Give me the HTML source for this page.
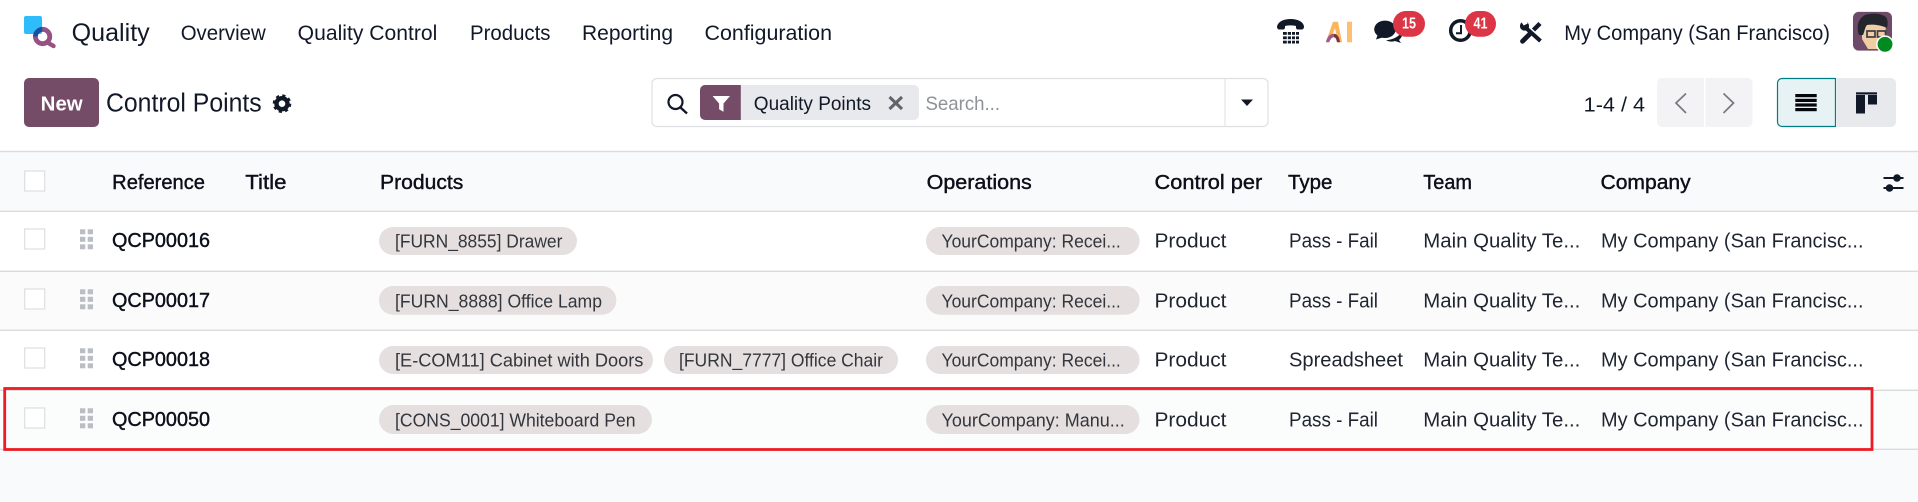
<!DOCTYPE html>
<html lang="en">
<head>
<meta charset="utf-8">
<title>Quality - Control Points</title>
<style>
html,body{margin:0;padding:0;background:#fff;width:1918px;height:502px;overflow:hidden}
svg{display:block}
text{font-family:"Liberation Sans",sans-serif;fill:#111827;white-space:pre}
.nav{font-size:21px}
.h{font-size:20px;fill:#0b0f1a;stroke:#0b0f1a;stroke-width:.4}
.r{font-size:20px;fill:#1f2530}
.b{font-size:20px;fill:#0b0f1a;stroke:#0b0f1a;stroke-width:.4}
.p{font-size:18.5px;fill:#33363c}
.pill{fill:#e6dfdf}
.cb{fill:#fff;stroke:#dcdee1;stroke-width:1.2}
.ln{fill:#d9dbde}
.d{fill:#b9bec4}
</style>
</head>
<body>
<svg xmlns="http://www.w3.org/2000/svg" width="1918" height="502" viewBox="0 0 1918 502">
<defs>
<g id="grip"><rect class="d" x="80" y="0" width="5.300" height="5"/><rect class="d" x="87.700" y="0" width="5.300" height="5"/><rect class="d" x="80" y="7.500" width="5.300" height="5"/><rect class="d" x="87.700" y="7.500" width="5.300" height="5"/><rect class="d" x="80" y="15" width="5.300" height="5"/><rect class="d" x="87.700" y="15" width="5.300" height="5"/></g>
</defs>
<rect width="1918" height="502" fill="#fff"/>

<!-- top nav -->
<rect x="24" y="16" width="18" height="18" rx="2" fill="#2ebcfa"/>
<path d="M35.400 36.500a7.200 7.200 0 0 1 7.200-7.200" fill="none" stroke="#1a4fa0" stroke-width="4.800"/>
<path d="M42.600 29.300a7.200 7.200 0 0 1 0 14.400 7.200 7.200 0 0 1-7.200-7.200" fill="none" stroke="#985184" stroke-width="4.800"/>
<path d="M47.500 42.500l6 3.500" fill="none" stroke="#985184" stroke-width="4.400" stroke-linecap="round"/>
<text x="71.700" y="41" font-size="25" textLength="78" lengthAdjust="spacingAndGlyphs">Quality</text>
<text class="nav" x="180.700" y="40" textLength="85" lengthAdjust="spacingAndGlyphs">Overview</text>
<text class="nav" x="297.700" y="40" textLength="139.600" lengthAdjust="spacingAndGlyphs">Quality Control</text>
<text class="nav" x="470" y="40" textLength="80.500" lengthAdjust="spacingAndGlyphs">Products</text>
<text class="nav" x="582" y="40" textLength="91" lengthAdjust="spacingAndGlyphs">Reporting</text>
<text class="nav" x="704.500" y="40" textLength="127.500" lengthAdjust="spacingAndGlyphs">Configuration</text>

<!-- phone -->
<path d="M1277 26.500c1-5 7-7.500 13.500-7.500s13 2.500 13.500 7.500c0 2-1 3-2.500 3h-3.500c-1.500 0-2-1-2-2.500v-1c-3.500-.8-7.500-.8-11 0v1c0 1.500-.5 2.500-2 2.500H1279.500c-1.500 0-2.500-1-2.500-3z" fill="#111827"/>
<g fill="#111827"><rect x="1283" y="32" width="16" height="2.800"/><rect x="1283" y="36.400" width="16" height="2.800"/><rect x="1283" y="40.700" width="16" height="2.800"/></g>
<g fill="#fff"><rect x="1286.800" y="31" width="1" height="13"/><rect x="1291" y="31" width="1" height="13"/><rect x="1295" y="31" width="1" height="13"/></g>
<!-- AI -->
<path d="M1333 21.700h5l4 20.600h-4l-3-14-3.500 9h-4z" fill="#f9b65f"/>
<path d="M1326 42.300c.8-5.500 4.200-8.500 7.700-8.500v3.500c-1.800 0-3.500 2.300-4.500 5z" fill="#9c5a8e"/>
<path d="M1333.700 33.800c3.300 0 5.800 3 6.300 8.500h-3c-.5-3-1.500-5-3.300-5z" fill="#7c3434"/>
<rect x="1347" y="21.700" width="5" height="20.600" fill="#fcbf73"/>
<!-- chat -->
<path d="M1386 40c6 0 12-3 15-7l1 3c-1 2-2 3-3 4l2 3-6-2c-3 1-6 1-9-1z" fill="#111827"/>
<ellipse cx="1385" cy="29.300" rx="10.800" ry="8.700" fill="#111827"/>
<path d="M1378 34l-2 5.500 8-2.500z" fill="#111827"/>
<rect x="1393" y="11" width="32" height="25.700" rx="12.800" fill="#dc3545"/>
<text x="1402" y="28.500" font-size="15.500" font-weight="700" style="fill:#fff" textLength="14" lengthAdjust="spacingAndGlyphs">15</text>
<!-- clock -->
<circle cx="1460.500" cy="30.500" r="9.800" fill="none" stroke="#111827" stroke-width="3.500"/>
<path d="M1461 25v8.300h-5" fill="none" stroke="#111827" stroke-width="2"/>
<rect x="1465" y="11" width="31" height="25.700" rx="12.800" fill="#dc3545"/>
<text x="1473.500" y="28.500" font-size="15.500" font-weight="700" style="fill:#fff" textLength="14" lengthAdjust="spacingAndGlyphs">41</text>
<!-- tools -->
<path d="M1526 28l14.500 13" fill="none" stroke="#111827" stroke-width="4"/>
<circle cx="1524.500" cy="26" r="4.600" fill="#111827"/>
<path d="M1520 20l3.700 5.500 4-2-2.700-5z" fill="#fff"/>
<path d="M1522.500 41.300l7-7" fill="none" stroke="#111827" stroke-width="4.800" stroke-linecap="round"/>
<path d="M1533.500 30l6.500-6.500" fill="none" stroke="#111827" stroke-width="4.400"/>

<text class="nav" x="1564.300" y="40" textLength="265.700" lengthAdjust="spacingAndGlyphs">My Company (San Francisco)</text>

<!-- avatar -->
<clipPath id="av"><rect x="1853" y="11.700" width="39" height="39" rx="6"/></clipPath>
<g clip-path="url(#av)">
<rect x="1853" y="11.700" width="39" height="39" fill="#6d4b68"/>
<path d="M1862 24c8-4 18-3 24 1l-1 13-6 11h-11l-6-10z" fill="#f1cda3"/>
<path d="M1859 35c-3-9-1-16 6-20 7-2 15-2 21 2 2 3 2 7 1 11-6-3-14-4-20-3-2 2-2 5-4 10z" fill="#23262d"/>
<g fill="none" stroke="#3a3e44" stroke-width="1.700"><rect x="1867" y="31" width="8" height="6"/><rect x="1877.500" y="31" width="8" height="6"/></g>
</g>
<circle cx="1885" cy="44.300" r="8.200" fill="#008a1f" stroke="#fff" stroke-width="1.500"/>

<!-- control panel -->
<rect x="24" y="78" width="75" height="49" rx="5" fill="#744c68"/>
<text x="40.700" y="110.700" font-size="20" font-weight="700" style="fill:#fff" textLength="42" lengthAdjust="spacingAndGlyphs">New</text>
<text x="106" y="111.500" font-size="25.500" textLength="155.700" lengthAdjust="spacingAndGlyphs">Control Points</text>
<circle cx="282" cy="103.700" r="5.500" fill="none" stroke="#111827" stroke-width="4.400"/>
<circle cx="282" cy="103.700" r="8.200" fill="none" stroke="#111827" stroke-width="2.200" stroke-dasharray="3.200 3.240"/>

<!-- search -->
<rect x="652" y="78.500" width="616" height="48" rx="5" fill="#fff" stroke="#dee0e3" stroke-width="1.200"/>
<rect x="1224.500" y="79" width="1" height="47" fill="#dee0e3"/>
<circle cx="675.500" cy="102" r="7" fill="none" stroke="#111827" stroke-width="2.200"/>
<path d="M680.500 107.500l6.500 6" stroke="#111827" stroke-width="2.400" fill="none"/>
<rect x="700" y="85" width="219" height="35" rx="5" fill="#e7e9ed"/>
<path d="M705 85h35.800v35H705a5 5 0 0 1-5-5V90a5 5 0 0 1 5-5z" fill="#744c68"/>
<path d="M712.600 96h17.400l-6.500 7.500v8.200l-4.400-2.500v-5.700z" fill="#fff"/>
<text x="753.800" y="110" font-size="19" textLength="117.200" lengthAdjust="spacingAndGlyphs">Quality Points</text>
<path d="M889.500 97l12.500 12M902 97l-12.500 12" stroke="#5f636a" stroke-width="3" fill="none"/>
<text x="925.500" y="110" font-size="19.500" style="fill:#8f9296" textLength="74.500" lengthAdjust="spacingAndGlyphs">Search...</text>
<path d="M1241 99.500h12l-6 6.500z" fill="#111827"/>

<!-- pager -->
<text x="1583.700" y="111.500" font-size="20" textLength="61.300" lengthAdjust="spacingAndGlyphs">1-4 / 4</text>
<path d="M1662 78h42v49h-42a5 5 0 0 1-5-5V83a5 5 0 0 1 5-5z" fill="#f3f3f5"/>
<path d="M1705.500 78h42a5 5 0 0 1 5 5v39a5 5 0 0 1-5 5h-42z" fill="#f3f3f5"/>
<path d="M1686 93.500l-10 9.500 10 10" fill="none" stroke="#77797f" stroke-width="1.700"/>
<path d="M1723.500 93.500l10 9.500-10 10" fill="none" stroke="#77797f" stroke-width="1.700"/>

<!-- view switcher -->
<path d="M1782 78.500h53.500v48H1782a4.500 4.500 0 0 1-4.500-4.500V83a4.500 4.500 0 0 1 4.500-4.500z" fill="#e6f2f3" stroke="#017e84" stroke-width="1.200"/>
<path d="M1837 78h54a5 5 0 0 1 5 5v39a5 5 0 0 1-5 5h-54z" fill="#e7e9ed"/>
<g fill="#05070d"><rect x="1795.300" y="94" width="21.400" height="3.200"/><rect x="1795.300" y="98.800" width="21.400" height="3.200"/><rect x="1795.300" y="103.400" width="21.400" height="3.200"/><rect x="1795.300" y="108" width="21.400" height="3.200"/></g>
<g fill="#111827"><rect x="1856" y="92.300" width="21" height="2.200"/><rect x="1856" y="95" width="9" height="18.500"/><rect x="1868" y="95" width="9" height="9.500"/></g>

<!-- table -->
<rect x="0" y="151" width="1918" height="351" fill="#f9fafb"/>
<rect x="0" y="212" width="1918" height="59" fill="#fff"/>
<rect x="0" y="272" width="1918" height="58" fill="#fbfbfc"/>
<rect x="0" y="331" width="1918" height="59" fill="#fff"/>
<rect x="0" y="391" width="1918" height="58" fill="#fbfcfc"/>
<rect class="ln" x="0" y="150.800" width="1918" height="1.400"/>
<rect class="ln" x="0" y="210.600" width="1918" height="1.400"/>
<rect class="ln" x="0" y="270.600" width="1918" height="1.400"/>
<rect class="ln" x="0" y="329.600" width="1918" height="1.400"/>
<rect class="ln" x="0" y="389.600" width="1918" height="1.400"/>
<rect class="ln" x="0" y="448.600" width="1918" height="1.400"/>

<rect class="cb" x="24.700" y="171" width="20" height="20"/>
<text class="h" x="112.200" y="189" textLength="92.800" lengthAdjust="spacingAndGlyphs">Reference</text>
<text class="h" x="245.300" y="189" textLength="41.200" lengthAdjust="spacingAndGlyphs">Title</text>
<text class="h" x="380" y="189" textLength="83.300" lengthAdjust="spacingAndGlyphs">Products</text>
<text class="h" x="926.600" y="189" textLength="105.200" lengthAdjust="spacingAndGlyphs">Operations</text>
<text class="h" x="1154.500" y="189" textLength="107.800" lengthAdjust="spacingAndGlyphs">Control per</text>
<text class="h" x="1288" y="189" textLength="44.400" lengthAdjust="spacingAndGlyphs">Type</text>
<text class="h" x="1423.300" y="189" textLength="48.700" lengthAdjust="spacingAndGlyphs">Team</text>
<text class="h" x="1600.500" y="189" textLength="90.200" lengthAdjust="spacingAndGlyphs">Company</text>
<g fill="#111827" stroke="#111827"><path d="M1883.500 178h20M1883.500 188h20" stroke-width="2" fill="none"/><circle cx="1897" cy="178" r="3.800" stroke="none"/><circle cx="1889.500" cy="188" r="3.800" stroke="none"/></g>

<!-- row 1 -->
<rect class="cb" x="24.700" y="229" width="20" height="20"/>
<use href="#grip" y="229.300"/>
<text class="b" x="112" y="247" textLength="98" lengthAdjust="spacingAndGlyphs">QCP00016</text>
<rect class="pill" x="379" y="227" width="198" height="28" rx="14"/>
<text class="p" x="395" y="247.500" textLength="167.400" lengthAdjust="spacingAndGlyphs">[FURN_8855] Drawer</text>
<rect class="pill" x="926" y="227" width="213.600" height="28" rx="14"/>
<text class="p" x="941.500" y="247.500" textLength="179.300" lengthAdjust="spacingAndGlyphs">YourCompany: Recei...</text>
<text class="r" x="1154.500" y="247.500" textLength="72" lengthAdjust="spacingAndGlyphs">Product</text>
<text class="r" x="1289" y="247.500" textLength="89" lengthAdjust="spacingAndGlyphs">Pass - Fail</text>
<text class="r" x="1423.300" y="247.500" textLength="157" lengthAdjust="spacingAndGlyphs">Main Quality Te...</text>
<text class="r" x="1601" y="247.500" textLength="262.500" lengthAdjust="spacingAndGlyphs">My Company (San Francisc...</text>

<!-- row 2 -->
<rect class="cb" x="24.700" y="289" width="20" height="20"/>
<use href="#grip" y="289.300"/>
<text class="b" x="112" y="307" textLength="98" lengthAdjust="spacingAndGlyphs">QCP00017</text>
<rect class="pill" x="379" y="286" width="237.300" height="28.700" rx="14"/>
<text class="p" x="395" y="307.500" textLength="207" lengthAdjust="spacingAndGlyphs">[FURN_8888] Office Lamp</text>
<rect class="pill" x="926" y="286" width="213.600" height="28.700" rx="14"/>
<text class="p" x="941.500" y="307.500" textLength="179.300" lengthAdjust="spacingAndGlyphs">YourCompany: Recei...</text>
<text class="r" x="1154.500" y="307.500" textLength="72" lengthAdjust="spacingAndGlyphs">Product</text>
<text class="r" x="1289" y="307.500" textLength="89" lengthAdjust="spacingAndGlyphs">Pass - Fail</text>
<text class="r" x="1423.300" y="307.500" textLength="157" lengthAdjust="spacingAndGlyphs">Main Quality Te...</text>
<text class="r" x="1601" y="307.500" textLength="262.500" lengthAdjust="spacingAndGlyphs">My Company (San Francisc...</text>

<!-- row 3 -->
<rect class="cb" x="24.700" y="348" width="20" height="20"/>
<use href="#grip" y="348.300"/>
<text class="b" x="112" y="366" textLength="98" lengthAdjust="spacingAndGlyphs">QCP00018</text>
<rect class="pill" x="379" y="346" width="274" height="28" rx="14"/>
<text class="p" x="395" y="366.500" textLength="248.400" lengthAdjust="spacingAndGlyphs">[E-COM11] Cabinet with Doors</text>
<rect class="pill" x="664" y="346" width="234" height="28" rx="14"/>
<text class="p" x="679" y="366.500" textLength="204" lengthAdjust="spacingAndGlyphs">[FURN_7777] Office Chair</text>
<rect class="pill" x="926" y="346" width="213.600" height="28" rx="14"/>
<text class="p" x="941.500" y="366.500" textLength="179.300" lengthAdjust="spacingAndGlyphs">YourCompany: Recei...</text>
<text class="r" x="1154.500" y="366.500" textLength="72" lengthAdjust="spacingAndGlyphs">Product</text>
<text class="r" x="1289" y="366.500" textLength="114" lengthAdjust="spacingAndGlyphs">Spreadsheet</text>
<text class="r" x="1423.300" y="366.500" textLength="157" lengthAdjust="spacingAndGlyphs">Main Quality Te...</text>
<text class="r" x="1601" y="366.500" textLength="262.500" lengthAdjust="spacingAndGlyphs">My Company (San Francisc...</text>

<!-- row 4 -->
<rect class="cb" x="24.700" y="408" width="20" height="20"/>
<use href="#grip" y="408.300"/>
<text class="b" x="112" y="426" textLength="98" lengthAdjust="spacingAndGlyphs">QCP00050</text>
<rect class="pill" x="379" y="405" width="273" height="29" rx="14.500"/>
<text class="p" x="395" y="426.500" textLength="240.500" lengthAdjust="spacingAndGlyphs">[CONS_0001] Whiteboard Pen</text>
<rect class="pill" x="926" y="405" width="213.600" height="29" rx="14.500"/>
<text class="p" x="941.500" y="426.500" textLength="183.200" lengthAdjust="spacingAndGlyphs">YourCompany: Manu...</text>
<text class="r" x="1154.500" y="426.500" textLength="72" lengthAdjust="spacingAndGlyphs">Product</text>
<text class="r" x="1289" y="426.500" textLength="89" lengthAdjust="spacingAndGlyphs">Pass - Fail</text>
<text class="r" x="1423.300" y="426.500" textLength="157" lengthAdjust="spacingAndGlyphs">Main Quality Te...</text>
<text class="r" x="1601" y="426.500" textLength="262.500" lengthAdjust="spacingAndGlyphs">My Company (San Francisc...</text>

<!-- annotation -->
<rect x="4.700" y="388.500" width="1867.300" height="61" fill="none" stroke="#ed1c24" stroke-width="2.800"/>
</svg>
</body>
</html>
